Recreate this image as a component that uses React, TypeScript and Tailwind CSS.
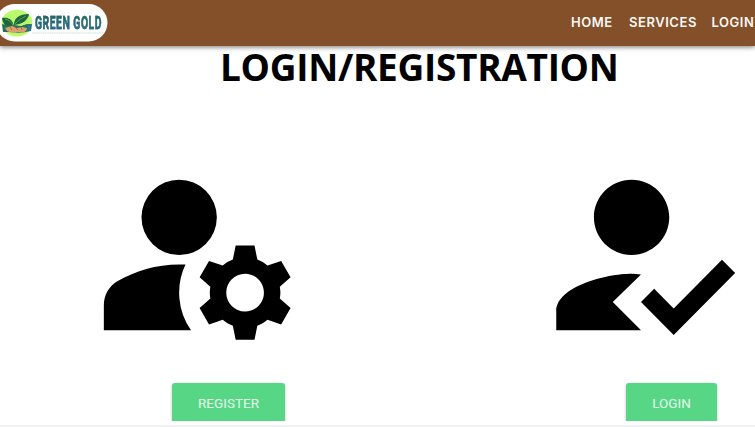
import { MdHowToReg, MdManageAccounts } from "react-icons/md";

function Logo() {
  return (
    <div className="relative h-[39px] w-[109px] shrink-0">
      <svg className="block h-[39px] w-[109px]" viewBox="0 0 109 39">
        <rect x="-4" y="0" width="111.5" height="37.5" rx="18.75" fill="#fff" />
        <ellipse cx="17" cy="19" rx="15.5" ry="13.3" fill="#b9fa6c" />
        <path d="M2 14c5-1 10 0 12 8l-1 4C7 24 3 21 2 14z" fill="#1f6540" />
        <path d="M14 21c0-7 5-11 15-11-1 6-6 10-15 11z" fill="#1f6540" />
        <path d="M13 22c-1-4-4-6-8-7M15 20c3-4 7-6 11-8" stroke="#68b74d" strokeWidth="0.7" fill="none" />
        <path d="M2 20l8 2 4-1 7 1 6-2 4 0v7l-11 2-8-1-9 0z" fill="#24705a" />
        <path d="M5 24l7-2 5 2 5-1 5 1-1 3-4 2-5-1-5 1-5-2z" fill="#dca06b" />
        <path d="M10 23l2 3M15 23l3 3M21 23l1 3" stroke="#95594e" strokeWidth="0.8" />
        <path d="M27 20l5 0-1 7-4 0z" fill="#2c7187" />
        <path d="M32 29h71" stroke="#a9c9bb" strokeWidth="1.2" strokeDasharray="1.3 0.5" opacity="0.6" />
      </svg>
      <span className="absolute top-[8px] left-[34.5px] origin-left scale-x-[0.575] bg-linear-to-b from-[#22664f] to-[#3768a5] bg-clip-text text-[18px] leading-[22px] font-bold tracking-[0.9px] whitespace-nowrap text-transparent [-webkit-text-stroke:0.5px_#286b74] font-['Roboto',sans-serif]">
        GREEN GOLD
      </span>
    </div>
  );
}

export default function App() {
  return (
    <div className="flex h-[427px] w-[755px] flex-col overflow-hidden bg-white font-['Roboto',sans-serif]">
      <header className="z-10 flex h-[46px] shrink-0 items-center justify-between bg-[#84502a] shadow-[0_1px_5px_rgba(0,0,0,0.55)]">
        <Logo />
        <nav className="flex h-full w-[184px] shrink-0 items-center gap-[15px] font-['Inter',sans-serif] text-[13px] font-semibold tracking-[0.55px] whitespace-nowrap text-[#fcf8f5]">
          <a className="w-[43px] shrink-0">HOME</a>
          <a className="w-[67.5px] shrink-0">SERVICES</a>
          <a className="w-[46px] shrink-0">LOGIN</a>
        </nav>
      </header>
      <h1 className="ml-[220px] h-[64px] shrink-0 font-['Open_Sans',sans-serif] text-[37px] leading-[42px] font-bold tracking-[-0.3px] whitespace-nowrap text-black">
        LOGIN/REGISTRATION
      </h1>
      <main className="flex h-[311px] shrink-0 overflow-hidden pt-[32px]">
        <section className="ml-[85px] flex w-[287px] shrink-0 flex-col items-center">
          <MdManageAccounts className="size-[226px] shrink-0 self-start" />
          <button className="mt-[15px] h-[50px] w-[113px] shrink-0 rounded-[3px] bg-[#57d686] pb-[9px] text-[13.5px] text-[#e4fbec] shadow-[0_1px_3px_rgba(0,0,0,0.25)]">REGISTER</button>
        </section>
        <section className="ml-[156px] flex w-[286px] shrink-0 flex-col items-center">
          <MdHowToReg className="size-[226px] shrink-0 self-start" />
          <button className="mt-[15px] ml-[1px] h-[50px] w-[91px] shrink-0 rounded-[3px] bg-[#57d686] pb-[9px] text-[13.5px] text-[#e4fbec] shadow-[0_1px_3px_rgba(0,0,0,0.25)]">LOGIN</button>
        </section>
      </main>
      <footer className="mt-[4px] h-[2px] shrink-0 bg-[#f1f1f1]" />
    </div>
  );
}
